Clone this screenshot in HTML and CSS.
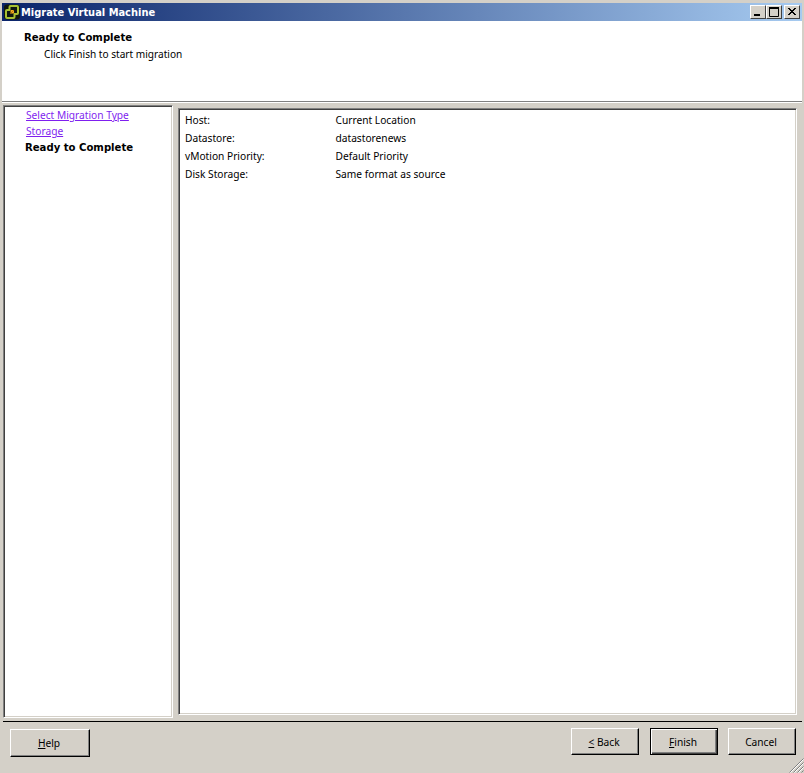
FILE: index.html
```html
<!DOCTYPE html>
<html lang="en">
<head>
<meta charset="utf-8">
<title>Migrate Virtual Machine</title>
<link rel="stylesheet" href="styles.css">
</head>
<body>
<div class="window">
  <div class="titlebar">
    <svg class="app-icon" width="16" height="16" viewBox="0 0 16 16">
      <rect x="0" y="0.500" width="16" height="15" rx="3" fill="#10180f"/>
      <path d="M5.500 6V3a1 1 0 0 1 1-1h6.500a1 1 0 0 1 1 1v6a1 1 0 0 1-1 1H10" fill="none" stroke="#a8c232" stroke-width="2"/>
      <path d="M10.500 10v3a1 1 0 0 1-1 1H3a1 1 0 0 1-1-1V7a1 1 0 0 1 1-1h3" fill="none" stroke="#a8c232" stroke-width="2"/>
      <rect x="6.500" y="6" width="3.500" height="3.500" fill="#f2ad1c"/>
      <path d="M6.500 9.500L10 6" stroke="#b87a10" fill="none"/>
    </svg>
    <span class="title">Migrate Virtual Machine</span>
    <div class="controls">
      <button class="ctl" aria-label="Minimize"><svg width="12" height="10" viewBox="0 0 12 10"><rect x="2" y="7" width="6" height="2" fill="#000"/></svg></button>
      <button class="ctl ctl-gap" aria-label="Maximize"><svg width="12" height="10" viewBox="0 0 12 10"><path d="M1.500 1.500h9v8h-9z" fill="none" stroke="#000"/><rect x="1" y="0" width="10" height="2" fill="#000"/></svg></button>
      <button class="ctl" aria-label="Close"><svg width="12" height="10" viewBox="0 0 12 10"><path d="M2 1l7 7M3 1l7 7M9 1L2 8M10 1L3 8" stroke="#000" fill="none"/></svg></button>
    </div>
  </div>
  <header class="head">
    <h1 class="head-title">Ready to Complete</h1>
    <p class="head-sub">Click Finish to start migration</p>
  </header>
  <main class="body">
    <nav class="steps">
      <a class="step" href="#">Select Migration Type</a>
      <a class="step" href="#">Storage</a>
      <span class="step current">Ready to Complete</span>
    </nav>
    <section class="summary">
      <div class="row"><span class="key">Host:</span><span>Current Location</span></div>
      <div class="row"><span class="key">Datastore:</span><span>datastorenews</span></div>
      <div class="row"><span class="key">vMotion Priority:</span><span>Default Priority</span></div>
      <div class="row"><span class="key">Disk Storage:</span><span>Same format as source</span></div>
    </section>
  </main>
  <footer class="foot">
    <button class="btn btn-help"><span><u>H</u>elp</span></button>
    <div class="foot-right">
      <button class="btn btn-back"><span><u>&lt;</u> Back</span></button>
      <button class="btn btn-default"><span><u>F</u>inish</span></button>
      <button class="btn"><span>Cancel</span></button>
    </div>
    <svg class="grip" width="16" height="16" viewBox="0 0 16 16">
      <path d="M15.500 1.500L1.500 15.500M15.500 5.500L5.500 15.500M15.500 9.500L9.500 15.500M15.500 13.500L13.500 15.500" stroke="#808080" fill="none"/>
      <path d="M15.500 2.500L2.500 15.500M15.500 6.500L6.500 15.500M15.500 10.500L10.500 15.500" stroke="#fff" fill="none"/>
    </svg>
  </footer>
</div>
</body>
</html>
```

FILE: styles.css
```css
* { box-sizing: border-box; }
html, body { margin: 0; height: 100%; }
body {
  background: #d4d0c8;
  font-family: "Noto Sans", "Liberation Sans", sans-serif;
  font-size: 10.200px;
  color: #000;
  overflow: hidden;
}
.window {
  position: relative;
  display: flex;
  flex-direction: column;
  height: 773px;
  padding: 3px 2px 0;
}
.titlebar {
  display: flex;
  align-items: center;
  flex: none;
  height: 18px;
  padding: 0 2px;
  background: linear-gradient(90deg, #0a246a 0%, #a6caf0 100%);
  color: #fff;
}
.app-icon { flex: none; }
.title {
  margin-left: 1px;
  font-family: "DejaVu Sans", sans-serif;
  font-weight: 700;
  font-size: 9.900px;
  white-space: nowrap;
}
.controls { display: flex; margin-left: auto; }
.ctl {
  width: 16px;
  height: 14px;
  padding: 0;
  display: flex;
  align-items: center;
  justify-content: center;
  background: #d4d0c8;
  border: 1px solid;
  border-color: #fff #404040 #404040 #fff;
}
.ctl-gap { margin-right: 2px; }
.head {
  flex: none;
  height: 81px;
  padding: 10px 22px 0;
  background: #fff;
  border-bottom: 1px solid #808080;
  box-shadow: 0 1px 0 #fff;
}
.head-title {
  margin: 0;
  font-family: "DejaVu Sans", sans-serif;
  font-size: 10.100px;
  font-weight: 700;
  line-height: 14px;
}
.head-sub {
  margin: 2px 0 0 20px;
  line-height: 14px;
  font-size: 10.100px;
}
.body {
  display: flex;
  flex: none;
  height: 612px;
  margin-top: 3px;
  padding-left: 1px;
}
.steps, .summary {
  background: #fff;
  border: 1px solid;
  border-color: #808080 #fff #fff #808080;
  box-shadow: inset 1px 1px 0 #404040, inset -1px -1px 0 #d4d0c8;
}
.steps {
  display: flex;
  flex-direction: column;
  flex: none;
  width: 170px;
  height: 613px;
  padding: 1px 0 0 22px;
}
.step {
  display: block;
  height: 16px;
  line-height: 16px;
  color: #7f1fef;
}
.current {
  margin: 1px 0 0 -1px;
  color: #000;
  font-family: "DejaVu Sans", sans-serif;
  font-weight: 700;
  font-size: 10.100px;
}
.summary {
  flex: none;
  width: 619px;
  height: 607px;
  margin: 3px 0 0 5px;
  padding: 2px 0 0 6px;
}
.row {
  display: flex;
  height: 18px;
  line-height: 18px;
}
.key { flex: none; width: 150.500px; }
.foot {
  flex: 1;
  display: flex;
  align-items: flex-start;
  margin-top: 4px;
  margin-left: 1px;
  padding-top: 6px;
  padding-left: 7px;
  border-top: 1px solid #000;
  position: relative;
}
.foot-right { display: flex; gap: 10px; margin-left: auto; margin-right: 6px; }
.btn {
  width: 68px;
  height: 27px;
  padding: 0 2px 0 0;
  font: inherit;
  color: #000;
  background: #d4d0c8;
  border: 1px solid;
  border-color: #fff #000 #000 #fff;
  box-shadow: inset -1px -1px 0 #808080;
}
.btn-help { width: 80px; height: 28px; margin-top: 1px; }
.btn-back { margin-right: 1px; }
.btn-default {
  border-color: #000;
  box-shadow: inset 1px 1px 0 #fff, inset -1px -1px 0 #404040, inset -2px -2px 0 #808080;
}
.grip { position: absolute; right: -2px; bottom: 0; }
```
